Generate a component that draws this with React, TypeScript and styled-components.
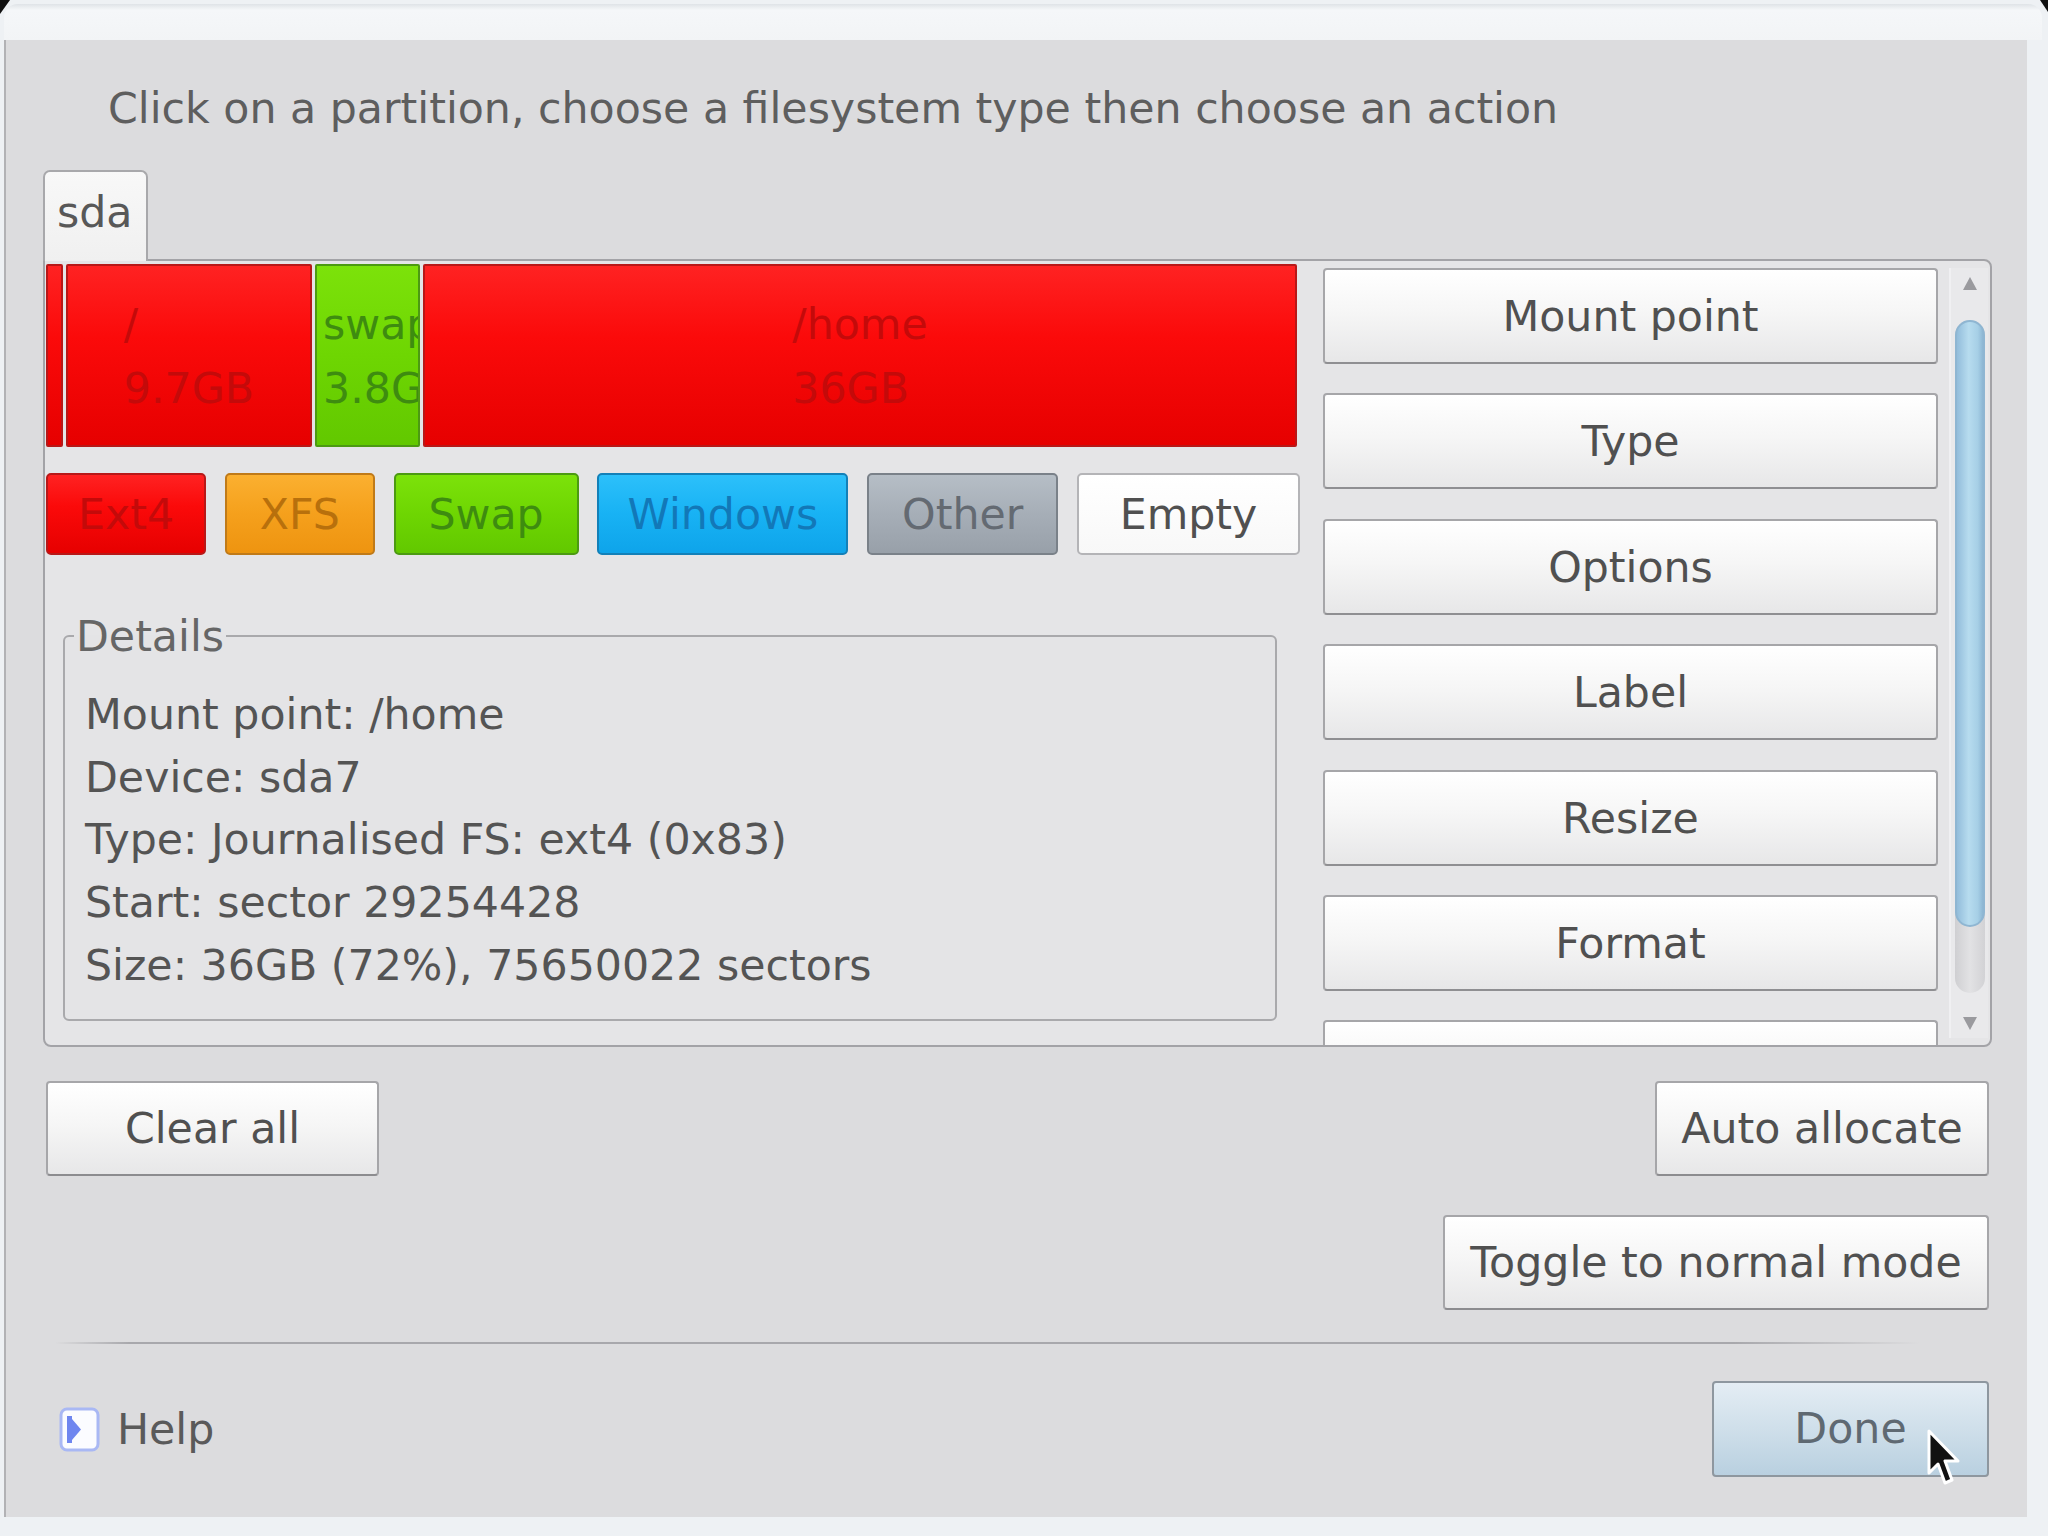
import React from 'react';
import styled, { createGlobalStyle } from 'styled-components';

const GlobalStyle = createGlobalStyle`
    html, body {
        margin: 0;
        padding: 0;
    }
    body {
        background: #eef1f4;
        font-family: "DejaVu Sans", "Liberation Sans", sans-serif;
    }
`

const Screen = styled.div`
    position: relative;
    width: 2048px;
    height: 1536px;
    overflow: hidden;
    box-sizing: border-box;
    padding: 4px 0 0 4px;
    background: #eef1f4;
    display: flex;
    flex-direction: column;

    &::before, &::after {
        content: '';
        position: absolute;
        top: 0;
        width: 0;
        height: 0;
        border-style: solid;
    }
    &::before {
        left: 0;
        border-width: 14px 10px 0 0;
        border-color: #111 transparent transparent transparent;
    }
    &::after {
        right: 0;
        border-width: 0 8px 12px 0;
        border-color: transparent #111 transparent transparent;
    }
`

const TitleStrip = styled.div`
    height: 36px;
    margin-right: 6px;
    border-radius: 14px 14px 0 0;
    background: linear-gradient(#dfe3e7 0px, #f5f7f9 6px, #f2f4f6 100%);
`

const Dialog = styled.div`
    width: 2023px;
    height: 1477px;
    box-sizing: border-box;
    background: #dcdcde;
    border-left: 2px solid #b2b2b5;
    padding: 0 35px 0 37px;
    display: flex;
    flex-direction: column;
    color: #545454;
    font-size: 42.7px;
`

const Instruction = styled.div`
    height: 130px;
    box-sizing: border-box;
    padding: 6px 0 0 65px;
    line-height: 124px;
    color: #5e5e5e;
    white-space: nowrap;
`

const TabStrip = styled.div`
    display: flex;
    height: 89px;
`

const Tab = styled.div`
    position: relative;
    z-index: 1;
    width: 105px;
    height: 91px;
    box-sizing: border-box;
    border: 2px solid #a8a8ab;
    border-bottom: 0;
    border-radius: 7px 7px 0 0;
    background: linear-gradient(#f8f8f8, #f0f0f0);
    padding-left: 12px;
    line-height: 80px;
    color: #585858;
`

const Panel = styled.div`
    height: 788px;
    box-sizing: border-box;
    border: 2px solid #a3a3a7;
    border-radius: 0 8px 8px 8px;
    background: #e5e5e7;
    padding: 3px 0 0 1px;
    display: flex;
`

const LeftPane = styled.div`
    width: 1254px;
    flex-shrink: 0;
    display: flex;
    flex-direction: column;
`

const PartitionBar = styled.div`
    height: 183px;
    display: flex;
    gap: 3px;
`

const Segment = styled.div<{ $bg: string; $edge: string; $text: string }>`
    flex-shrink: 0;
    box-sizing: border-box;
    height: 100%;
    border: 2px solid ${p => p.$edge};
    border-radius: 2px;
    background: ${p => p.$bg};
    color: ${p => p.$text};
    display: flex;
    align-items: center;
    justify-content: safe center;
    overflow: hidden;
    padding: 0 6px;
`

const SegmentLabel = styled.div`
    white-space: pre;
    line-height: 64px;
`

const TypeRow = styled.div`
    margin-top: 26px;
    height: 82px;
    display: flex;
    justify-content: space-between;
`

const TypeButton = styled.div<{ $bg: string; $edge: string; $text: string; $w: number }>`
    width: ${p => p.$w}px;
    height: 82px;
    box-sizing: border-box;
    border: 2px solid ${p => p.$edge};
    border-radius: 5px;
    background: ${p => p.$bg};
    color: ${p => p.$text};
    text-align: center;
    line-height: 78px;
    white-space: nowrap;
`

const Details = styled.fieldset`
    min-width: 0;
    margin: 56px 23px 0 17px;
    padding: 22px 20px 22px 20px;
    border: 2px solid #a9a9ac;
    border-radius: 6px;
    background: #e4e4e6;
`

const DetailsTitle = styled.legend`
    margin-left: -11px;
    padding: 0 2px;
    line-height: 50px;
    color: #666;
`

const DetailLine = styled.div`
    line-height: 62.7px;
    white-space: nowrap;
`

const ActionColumn = styled.div`
    width: 615px;
    flex-shrink: 0;
    margin-left: 23px;
    box-sizing: border-box;
    padding-top: 4px;
    display: flex;
    flex-direction: column;
    gap: 29.4px;
    overflow: hidden;
`

const ActionButton = styled.div`
    flex-shrink: 0;
    height: 96px;
    box-sizing: border-box;
    border: 2px solid #a6a6a9;
    border-bottom-color: #8f8f92;
    border-radius: 4px;
    background: linear-gradient(#ffffff, #f6f6f6 45%, #e7e7e8);
    text-align: center;
    line-height: 92px;
    color: #505050;
`

const Scrollbar = styled.div`
    width: 39px;
    height: 770px;
    margin: 4px 0 0 11px;
    box-sizing: border-box;
    padding: 9px 0 8px;
    border-left: 2px solid #f0f0f2;
    background: #e9e9eb;
    display: flex;
    flex-direction: column;
    align-items: center;
`

const Arrow = styled.div<{ $down?: boolean }>`
    width: 0;
    height: 0;
    border-left: 7px solid transparent;
    border-right: 7px solid transparent;
    border-${p => (p.$down ? 'top' : 'bottom')}: 13px solid #9a9a9e;
    margin-top: ${p => (p.$down ? 'auto' : '0')};
`

const Track = styled.div`
    margin-top: 30px;
    width: 30px;
    height: 673px;
    border-radius: 15px;
    background: linear-gradient(90deg, #cfcfd2, #e2e2e4 50%, #d2d2d5);
`

const Thumb = styled.div`
    height: 607px;
    border-radius: 15px;
    box-sizing: border-box;
    border: 2px solid #8fb6d2;
    background: linear-gradient(90deg, #93bddb, #b7dcef 45%, #a6cfe6 80%, #8db6d3);
`

const ButtonRow = styled.div<{ $gap: number; $end?: boolean }>`
    margin-top: ${p => p.$gap}px;
    padding: 0 3px;
    display: flex;
    justify-content: ${p => (p.$end ? 'flex-end' : 'space-between')};
`

const PushButton = styled.div<{ $w: number }>`
    position: relative;
    width: ${p => p.$w}px;
    height: 95px;
    box-sizing: border-box;
    border: 2px solid #a6a6a9;
    border-bottom-color: #8c8c8f;
    border-radius: 4px;
    background: linear-gradient(#ffffff, #f6f6f6 45%, #e7e7e8);
    text-align: center;
    line-height: 91px;
    color: #505050;
    white-space: nowrap;
`

const DefaultButton = styled(PushButton)`
    height: 96px;
    border-color: #8e979f;
    background: linear-gradient(#e4edf4, #cfdfea 50%, #b9d0e0);
    color: #5f6972;
`

const Separator = styled.div`
    margin: 32px 72px 0 12px;
    height: 2px;
    background: linear-gradient(90deg, rgba(160, 160, 164, 0), #a8a8ac 4%, #a8a8ac 90%, rgba(160, 160, 164, 0));
`

const Footer = styled.div`
    margin-top: 37px;
    padding: 0 3px 0 16px;
    display: flex;
    align-items: center;
    justify-content: space-between;
`

const HelpLink = styled.div`
    display: flex;
    align-items: center;
    gap: 17px;
    color: #5a5a5a;
`

const Cursor = styled.svg`
    position: absolute;
    left: 212px;
    top: 46px;
`

const segments = [
    { w: 17, kind: 'ext4', lines: ['', ''] },
    { w: 246, kind: 'ext4', lines: ['/', '9.7GB'] },
    { w: 105, kind: 'swap', lines: ['swap', '3.8GB'] },
    { w: 874, kind: 'ext4', lines: ['/home', '36GB'] },
]

const palette: Record<string, { bg: string; edge: string; text: string }> = {
    ext4: { bg: 'linear-gradient(#ff2222, #fb0a0a 40%, #e60000)', edge: '#b81818', text: '#c40a0a' },
    xfs: { bg: 'linear-gradient(#fbb030, #f5a01c 50%, #ee9410)', edge: '#c07a18', text: '#b8700c' },
    swap: { bg: 'linear-gradient(#7ce20a, #6ed602 50%, #62c800)', edge: '#4c9a12', text: '#3e8c10' },
    windows: { bg: 'linear-gradient(#2cc0fa, #18b2f4 50%, #0ea4ea)', edge: '#1380b8', text: '#1278b8' },
    other: { bg: 'linear-gradient(#b6bec6, #a6aeb7 50%, #98a0a9)', edge: '#7a8189', text: '#646a72' },
    empty: { bg: 'linear-gradient(#ffffff, #f8f8f8)', edge: '#b4b4b7', text: '#505050' },
}

const types = [
    { label: 'Ext4', kind: 'ext4', w: 160 },
    { label: 'XFS', kind: 'xfs', w: 150 },
    { label: 'Swap', kind: 'swap', w: 185 },
    { label: 'Windows', kind: 'windows', w: 251 },
    { label: 'Other', kind: 'other', w: 191 },
    { label: 'Empty', kind: 'empty', w: 223 },
]

const details = [
    'Mount point: /home',
    'Device: sda7',
    'Type: Journalised FS: ext4 (0x83)',
    'Start: sector 29254428',
    'Size: 36GB (72%), 75650022 sectors',
]

const actions = ['Mount point', 'Type', 'Options', 'Label', 'Resize', 'Format', 'Delete']

function HelpIcon() {
    return (
        <svg width="41" height="45" viewBox="0 0 41 45">
            <rect x="2" y="2" width="37" height="41" rx="6" fill="#fbfcff" stroke="#a9b8f4" strokeWidth="3" />
            <rect x="8" y="9" width="5" height="27" fill="#6f86ef" />
            <path d="M13 12 L22 22.5 L13 33 Z" fill="#6f86ef" />
        </svg>
    )
}

function App() {
    return (
        <>
            <GlobalStyle />
            <Screen>
                <TitleStrip />
                <Dialog>
                    <Instruction>Click on a partition, choose a filesystem type then choose an action</Instruction>

                    <TabStrip>
                        <Tab>sda</Tab>
                    </TabStrip>

                    <Panel>
                        <LeftPane>
                            <PartitionBar>
                                {segments.map((s, i) => (
                                    <Segment
                                        key={i}
                                        $bg={palette[s.kind].bg}
                                        $edge={palette[s.kind].edge}
                                        $text={palette[s.kind].text}
                                        style={{ width: s.w }}
                                    >
                                        <SegmentLabel>{s.lines.join('\n')}</SegmentLabel>
                                    </Segment>
                                ))}
                            </PartitionBar>

                            <TypeRow>
                                {types.map(t => (
                                    <TypeButton
                                        key={t.label}
                                        $w={t.w}
                                        $bg={palette[t.kind].bg}
                                        $edge={palette[t.kind].edge}
                                        $text={palette[t.kind].text}
                                    >
                                        {t.label}
                                    </TypeButton>
                                ))}
                            </TypeRow>

                            <Details>
                                <DetailsTitle>Details</DetailsTitle>
                                {details.map(d => <DetailLine key={d}>{d}</DetailLine>)}
                            </Details>
                        </LeftPane>

                        <ActionColumn>
                            {actions.map(a => <ActionButton key={a}>{a}</ActionButton>)}
                        </ActionColumn>

                        <Scrollbar>
                            <Arrow />
                            <Track>
                                <Thumb />
                            </Track>
                            <Arrow $down />
                        </Scrollbar>
                    </Panel>

                    <ButtonRow $gap={34}>
                        <PushButton $w={333}>Clear all</PushButton>
                        <PushButton $w={334}>Auto allocate</PushButton>
                    </ButtonRow>

                    <ButtonRow $gap={39} $end>
                        <PushButton $w={546}>Toggle to normal mode</PushButton>
                    </ButtonRow>

                    <Separator />

                    <Footer>
                        <HelpLink>
                            <HelpIcon />
                            Help
                        </HelpLink>
                        <DefaultButton $w={277}>
                            Done
                            <Cursor width="36" height="62" viewBox="0 0 36 62">
                                <path
                                    d="M3 2 L3 44 L12 35 L19 54 L26 51 L19 32 L32 32 Z"
                                    fill="#111"
                                    stroke="#fff"
                                    strokeWidth="3"
                                    strokeLinejoin="round"
                                />
                            </Cursor>
                        </DefaultButton>
                    </Footer>
                </Dialog>
            </Screen>
        </>
    );
}

export default App;
